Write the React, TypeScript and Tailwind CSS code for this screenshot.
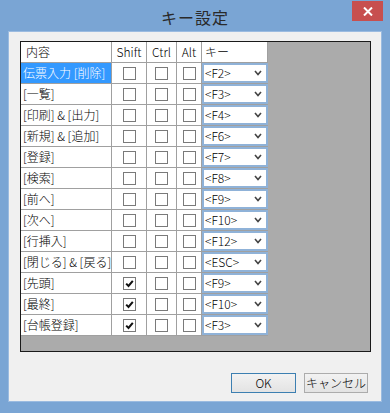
import React from "react";

type Row = { label: string; key: string; shift?: boolean };

const rows: Row[] = [
  { label: "伝票入力 [削除]", key: "<F2>" },
  { label: "[一覧]", key: "<F3>" },
  { label: "[印刷] & [出力]", key: "<F4>" },
  { label: "[新規] & [追加]", key: "<F6>" },
  { label: "[登録]", key: "<F7>" },
  { label: "[検索]", key: "<F8>" },
  { label: "[前へ]", key: "<F9>" },
  { label: "[次へ]", key: "<F10>" },
  { label: "[行挿入]", key: "<F12>" },
  { label: "[閉じる] & [戻る]", key: "<ESC>" },
  { label: "[先頭]", key: "<F9>", shift: true },
  { label: "[最終]", key: "<F10>", shift: true },
  { label: "[台帳登録]", key: "<F3>", shift: true },
];

const font = { fontFamily: '"Noto Sans CJK JP", "Liberation Sans", sans-serif' };

function Check({ on }: { on?: boolean }) {
  return (
    <div className="w-[13px] h-[13px] border border-[#7a7a7a] bg-white flex items-center justify-center">
      {on && (
        <svg width="9" height="9" viewBox="0 0 9 9">
          <path d="M1.2 4.6 L3.5 7 L7.8 1.8" stroke="#111" strokeWidth="2" fill="none" />
        </svg>
      )}
    </div>
  );
}

function KeySelect({ value }: { value: string }) {
  return (
    <div className="h-full w-full bg-white border-2 border-[#8fb2d8] flex items-center justify-between pl-[1px] pr-[4px] text-[12px] font-light text-black">
      <span>{value}</span>
      <svg width="8" height="6" viewBox="0 0 8 6">
        <path d="M1 1 L4 4.5 L7 1" stroke="#444" strokeWidth="1.6" fill="none" />
      </svg>
    </div>
  );
}

export default function App() {
  const cell = "border-r border-b border-[#a0a0a0] h-[21px] bg-white";
  return (
    <div className="w-[390px] h-[413px] bg-[#7aa5d4] flex flex-col text-black" style={font}>
      {/* title bar */}
      <div className="relative h-[31px] flex items-center justify-center">
        <span className="text-[16px] text-[#2a2a2a] tracking-[1px] mt-[2px]">キー設定</span>
        <div className="absolute right-[7px] top-[1px] w-[31px] h-[20px] bg-[#c74f4f] flex items-center justify-center">
          <svg width="10" height="9" viewBox="0 0 10 9">
            <path d="M1 0.5 L9 8.5 M9 0.5 L1 8.5" stroke="#fff" strokeWidth="2" />
          </svg>
        </div>
      </div>

      {/* client area */}
      <div className="mx-[8px] h-[371px] bg-[#f0f0f0] border border-[#9bbbe0] flex flex-col">
        <div className="ml-[11px] mt-[9px] w-[351px] h-[311px] border border-[#1a1a1a] bg-[#ababab]">
          <div className="grid grid-cols-[91px_35px_30px_25px_66px] w-[247px] text-[12px] font-light">
            <div className={cell + " pl-[5px] flex items-center"}>内容</div>
            <div className={cell + " flex items-center justify-center"}>Shift</div>
            <div className={cell + " flex items-center justify-center"}>Ctrl</div>
            <div className={cell + " flex items-center justify-center"}>Alt</div>
            <div className={cell + " pl-[3px] flex items-center"}>キー</div>
            {rows.map((r, i) => (
              <React.Fragment key={i}>
                <div
                  className={
                    "border-r border-b border-[#a0a0a0] h-[21px] pl-[2px] flex items-center whitespace-nowrap " +
                    (i === 0 ? "bg-[#3399ff] text-white" : "bg-white")
                  }
                >
                  {r.label}
                </div>
                <div className={cell + " flex items-center justify-center"}>
                  <Check on={r.shift} />
                </div>
                <div className={cell + " flex items-center justify-center"}>
                  <Check />
                </div>
                <div className={cell + " flex items-center justify-center"}>
                  <Check />
                </div>
                <div className="h-[21px] border-b border-[#a0a0a0] bg-white">
                  <KeySelect value={r.key} />
                </div>
              </React.Fragment>
            ))}
          </div>
        </div>

        <div className="flex justify-end gap-[8px] mt-[21px] mr-[13px] text-[12px] font-light">
          <button className="w-[65px] h-[20px] border border-[#3c7fb1] bg-gradient-to-b from-[#f2f2f2] to-[#e3e3e3] flex items-center justify-center">
            OK
          </button>
          <button className="w-[64px] h-[20px] border border-[#acacac] bg-gradient-to-b from-[#f2f2f2] to-[#e3e3e3] flex items-center justify-center">
            キャンセル
          </button>
        </div>
      </div>
    </div>
  );
}
